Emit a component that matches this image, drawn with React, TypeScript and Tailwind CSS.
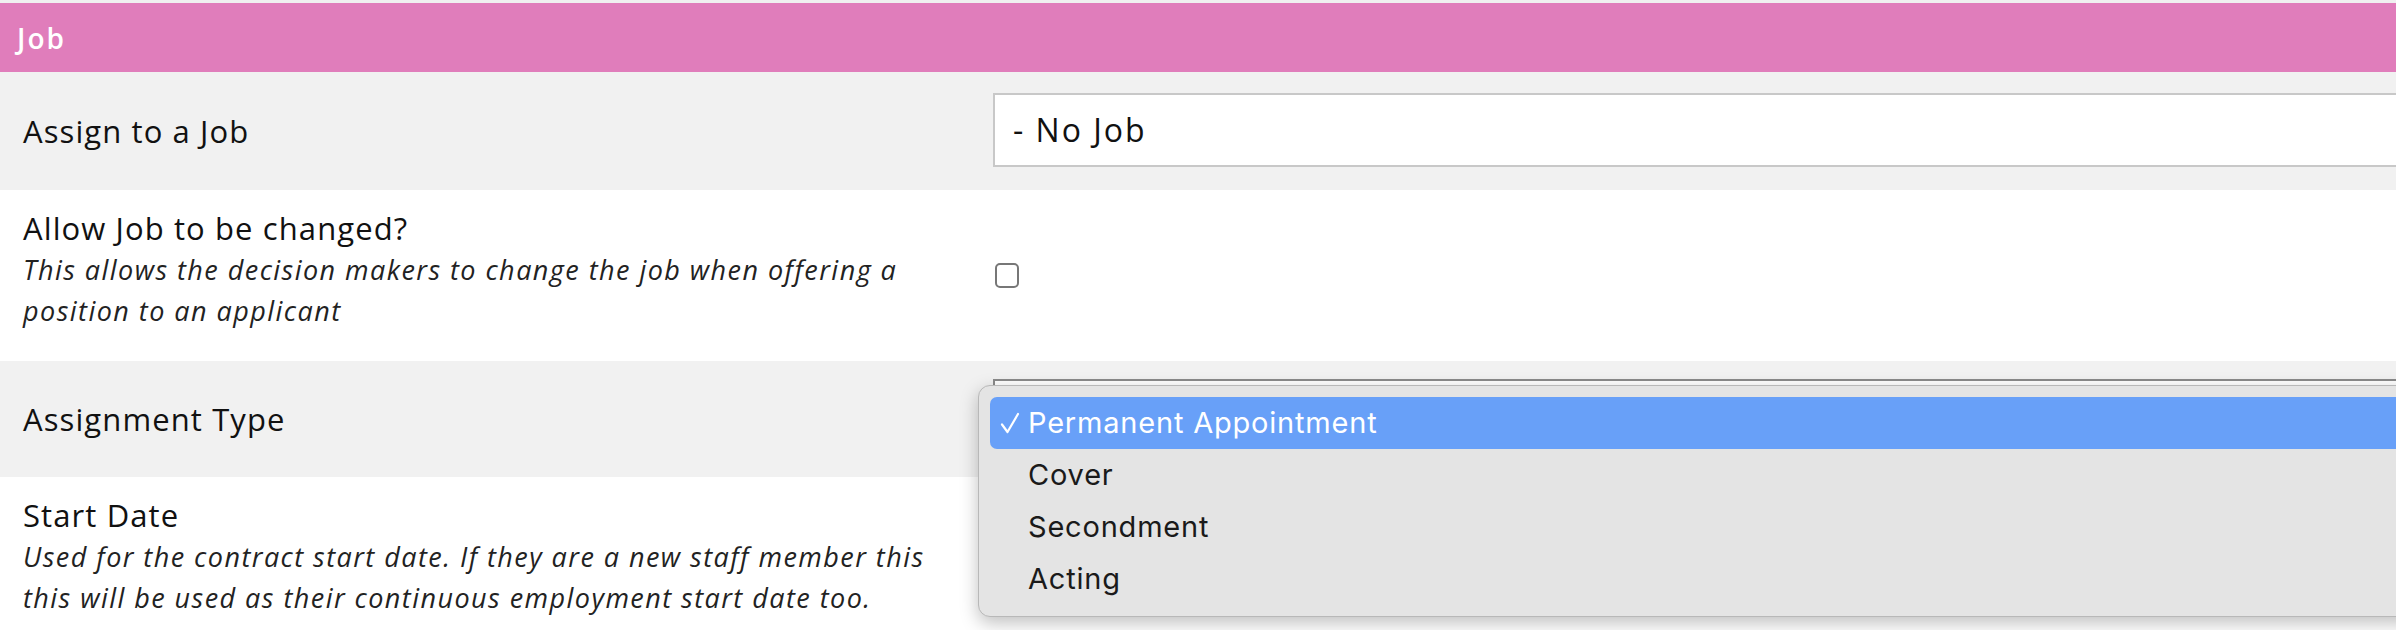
const labelFont = "font-['Open_Sans','Liberation_Sans',sans-serif]";
const menuFont = "font-['Inter','Liberation_Sans',sans-serif]";

interface RowProps {
  label: string;
  hint?: string;
  height: string;
  shaded?: boolean;
  children?: React.ReactNode;
}

function Row({ label, hint, height, shaded, children }: RowProps) {
  return (
    <div className={`flex ${height} ${hint ? "items-start" : "items-center"} ${shaded ? "bg-[#f1f1f1]" : "bg-white"}`}>
      <div className={`w-[993px] shrink-0 pl-[23px] pr-[40px] ${hint ? "pt-[18px]" : ""}`}>
        <div className="text-[31px] leading-[41px] tracking-[1.1px] text-[#111]">{label}</div>
        {hint && <div className="text-[27px] italic leading-[41px] tracking-[1.45px] text-[#222]">{hint}</div>}
      </div>
      <div className="flex flex-1 items-center self-stretch">{children}</div>
    </div>
  );
}

function Tick() {
  return (
    <svg width="20" height="24" viewBox="0 0 20 24" fill="none" stroke="currentColor" strokeWidth="2.2" strokeLinecap="round" strokeLinejoin="round">
      <path d="M2 13.5 L7.5 21 L18 3" />
    </svg>
  );
}

export default function App() {
  const options = ["Permanent Appointment", "Cover", "Secondment", "Acting"];

  return (
    <div className={`relative h-[630px] w-[2396px] overflow-hidden bg-[#f0f0f0] pt-[3px] ${labelFont}`}>
      {/* ── section header ── */}
      <div className="flex h-[69px] items-center bg-[#e07dbb] pl-[17px] text-[28px] font-semibold tracking-[2px] text-white">
        Job
      </div>

      <Row label="Assign to a Job" height="h-[118px]" shaded>
        <div className="mb-[2px] flex h-[74px] flex-1 items-center border-2 border-r-0 border-[#c8c8c8] bg-white pl-[18px] text-[32px] tracking-[2px] text-[#111]">
          - No Job
        </div>
      </Row>

      <Row
        label="Allow Job to be changed?"
        hint="This allows the decision makers to change the job when offering a position to an applicant"
        height="h-[171px]"
      >
        <div className="ml-[2px] h-[25px] w-[24px] rounded-[5px] border-2 border-[#777] bg-white" />
      </Row>

      <Row label="Assignment Type" height="h-[116px]" shaded>
        <div className="h-[74px] flex-1 self-start mt-[18px] border-2 border-r-0 border-[#8a8a8a] bg-white" />
      </Row>

      <Row
        label="Start Date"
        hint="Used for the contract start date. If they are a new staff member this this will be used as their continuous employment start date too."
        height="h-[153px]"
      />

      {/* ── native select popup ── */}
      <div
        className={`absolute left-[978px] top-[385px] w-[1440px] rounded-[12px] border border-[#b8b8b8] bg-[#e4e4e4] px-[11px] py-[11px] shadow-[0_6px_18px_rgba(0,0,0,0.25)] ${menuFont}`}
      >
        {options.map((opt, i) => (
          <div
            key={opt}
            className={`flex h-[52px] items-center rounded-[7px] text-[29px] tracking-[0.8px] ${
              i === 0 ? "bg-[#68a0f8] text-white" : "text-[#1a1a1a]"
            }`}
          >
            <span className="flex w-[38px] justify-center pl-[2px]">{i === 0 && <Tick />}</span>
            {opt}
          </div>
        ))}
      </div>
    </div>
  );
}
